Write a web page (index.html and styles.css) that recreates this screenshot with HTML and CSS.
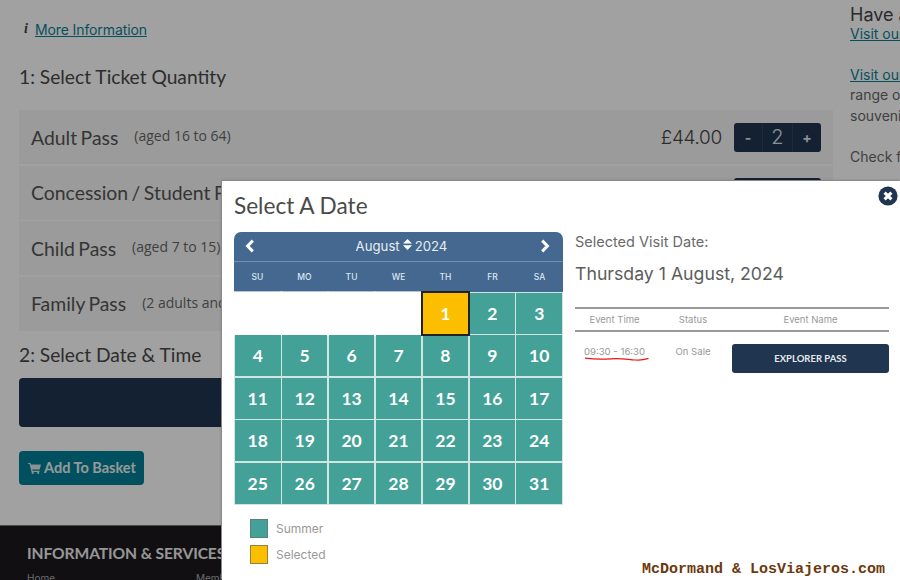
FILE: index.html
```html
<!DOCTYPE html>
<html lang="en">
<head>
<meta charset="utf-8">
<title>Select A Date</title>
<link rel="stylesheet" href="styles.css">
</head>
<body>
<div class="page">
  <div class="columns">
    <main class="main">
      <p class="info"><span class="info-i">i</span><a class="link" href="#">More Information</a></p>
      <h2 class="step step-one">1: Select Ticket Quantity</h2>
      <div class="tickets">
        <div class="ticket"><span class="t-name">Adult Pass</span><span class="t-note">(aged 16 to 64)</span><span class="t-price">£44.00</span>
          <div class="stepper"><span class="s-btn">-</span><span class="s-val">2</span><span class="s-btn">+</span></div></div>
        <div class="ticket"><span class="t-name">Concession / Student Pass</span>
          <div class="stepper stepper-end"></div></div>
        <div class="ticket"><span class="t-name">Child Pass</span><span class="t-note">(aged 7 to 15)</span></div>
        <div class="ticket"><span class="t-name">Family Pass</span><span class="t-note">(2 adults and 2 children)</span></div>
      </div>
      <h2 class="step step-two">2: Select Date &amp; Time</h2>
      <div class="date-bar"></div>
      <button class="basket" type="button">
        <svg class="cart" viewBox="0 0 14 13" width="13" height="12"><path d="M0 1h2.6l.5 1.6H14l-1.4 5.6H4.6l.3 1.3h7.6v1.2H3.8L1.7 2.2H0z" fill="#dfe6e8"/><circle cx="5" cy="11.8" r="1.2" fill="#dfe6e8"/><circle cx="11" cy="11.8" r="1.2" fill="#dfe6e8"/></svg>
        Add To Basket</button>
    </main>
    <aside class="side">
      <h3 class="side-title">Have a question?</h3>
      <a class="side-link" href="#">Visit our help centre</a>
      <a class="side-link side-gap" href="#">Visit our shop</a>
      <p class="side-text">range of gifts and</p>
      <p class="side-text">souvenirs to buy</p>
      <p class="side-text side-check">Check for offers</p>
    </aside>
  </div>
  <footer class="footer">
    <h4 class="foot-title">INFORMATION &amp; SERVICES</h4>
    <div class="foot-links"><span class="foot-a">Home</span><span>Membership</span></div>
  </footer>
</div>

<div class="overlay"></div>

<section class="modal">
  <h2 class="modal-title">Select A Date</h2>
  <button class="close" type="button" aria-label="Close">
    <svg viewBox="0 0 20 20" width="20" height="20"><circle cx="10" cy="10" r="9.6" fill="#1f3550"/><path d="M6.6 6.6l6.8 6.8M13.4 6.6l-6.8 6.8" stroke="#fff" stroke-width="3.2" stroke-linecap="butt"/></svg>
  </button>
  <div class="modal-body">
    <div class="calendar">
      <div class="cal-head">
        <div class="cal-nav">
          <svg class="chev" viewBox="0 0 10 14" width="10" height="14"><path d="M7.8 1.6L2.6 7l5.2 5.4" fill="none" stroke="#fff" stroke-width="3"/></svg>
          <div class="cal-month">August
            <svg class="sort" viewBox="0 0 9 11" width="9" height="11"><path d="M4.5 0L9 4.4H0zM4.5 11L0 6.2h9z" fill="#fff"/></svg>
            2024</div>
          <svg class="chev" viewBox="0 0 10 14" width="10" height="14"><path d="M2.2 1.6L7.4 7l-5.2 5.4" fill="none" stroke="#fff" stroke-width="3"/></svg>
        </div>
        <div class="cal-days"><span>SU</span><span>MO</span><span>TU</span><span>WE</span><span>TH</span><span>FR</span><span>SA</span></div>
      </div>
      <div class="cal-grid">
        <span class="blank"></span><span class="blank"></span><span class="blank"></span><span class="blank"></span>
        <span class="day sel">1</span><span class="day">2</span><span class="day">3</span>
        <span class="day">4</span><span class="day">5</span><span class="day">6</span><span class="day">7</span><span class="day">8</span><span class="day">9</span><span class="day">10</span>
        <span class="day">11</span><span class="day">12</span><span class="day">13</span><span class="day">14</span><span class="day">15</span><span class="day">16</span><span class="day">17</span>
        <span class="day">18</span><span class="day">19</span><span class="day">20</span><span class="day">21</span><span class="day">22</span><span class="day">23</span><span class="day">24</span>
        <span class="day">25</span><span class="day">26</span><span class="day">27</span><span class="day">28</span><span class="day">29</span><span class="day">30</span><span class="day">31</span>
      </div>
      <div class="legend">
        <div class="legend-row"><span class="swatch swatch-summer"></span>Summer</div>
        <div class="legend-row"><span class="swatch swatch-selected"></span>Selected</div>
      </div>
    </div>
    <div class="details">
      <div class="visit-label">Selected Visit Date:</div>
      <div class="visit-date">Thursday 1 August, 2024</div>
      <div class="ev-head"><span class="col-time">Event Time</span><span class="col-status">Status</span><span class="col-name">Event Name</span></div>
      <div class="ev-row">
        <span class="col-time ev-time">09:30 - 16:30
          <svg class="scribble" viewBox="0 0 64 4" width="64" height="4"><path d="M0 1.2C10 2.4 16 2.6 26 1.8S42 2.4 50 3 60 2.6 63.5 1.4" fill="none" stroke="#f01414" stroke-width="1.2"/></svg>
        </span>
        <span class="col-status ev-status">On Sale</span>
        <button class="ev-btn" type="button">EXPLORER PASS</button>
      </div>
    </div>
  </div>
</section>

<div class="watermark">McDormand &amp; LosViajeros.com</div>
</body>
</html>
```
FILE: styles.css
```css
* { box-sizing: border-box; }
html, body { margin: 0; height: 580px; overflow: hidden; background: #fff; }
body { position: relative; width: 900px; font-family: "Inter", "Open Sans", sans-serif; color: #555; }
h2, h3, h4, p { margin: 0; font-weight: 400; }

.page { height: 580px; display: flex; flex-direction: column; overflow: hidden; }
.columns { display: flex; flex: none; height: 525px; padding-left: 19px; }
.main { width: 814px; flex: none; }
.info { display: flex; align-items: center; gap: 7px; padding: 20px 0 0 5px; height: 38px; font-size: 14px; }
.info-i { font: italic 700 14px "Liberation Serif", serif; color: #444; }
.link { color: #0b7f96; letter-spacing: -.1px; }

.step { font-family: "Lato", sans-serif; font-size: 19.2px; line-height: 24px; color: #484848; }
.step-one { margin-top: 27px; }
.tickets { display: flex; flex-direction: column; gap: 1.5px; margin-top: 21px; }
.ticket { height: 54px; background: #f6f6f6; display: flex; align-items: center; padding: 0 12px; }
.t-name { font-family: "Lato", sans-serif; font-size: 19.4px; word-spacing: -1.5px; color: #555; white-space: nowrap; }
.t-note { font-family: "Open Sans", sans-serif; font-size: 14px; margin: -3px 0 0 16px; color: #666; white-space: nowrap; }
.t-price { margin-left: auto; font-size: 19px; font-weight: 300; color: #444; letter-spacing: -.3px; }
.stepper { display: flex; width: 87px; height: 29px; margin-left: 12px; background: #1f3550; border-radius: 3px; color: #dfe4e9; }
.stepper-end { margin-left: auto; }
.s-btn, .s-val { display: flex; align-items: center; justify-content: center; }
.s-btn { width: 28px; font-weight: 700; font-size: 14px; }
.s-val { width: 31px; font-size: 20px; font-weight: 300; border-left: 1px solid #2d4660; border-right: 1px solid #2d4660; }

.step-two { margin-top: 12px; }
.date-bar { height: 49px; margin-top: 11px; background: #1f3550; border-radius: 4px; }
.basket { display: flex; align-items: center; gap: 3px; width: 125px; height: 34px; margin-top: 24px; padding: 0 0 0 9px; border: 0; border-radius: 4px; background: #007f97; color: #eef2f3; font: 700 14.5px "Lato", sans-serif; white-space: nowrap; }

.side { flex: none; width: 300px; margin-left: 17px; padding-top: 4px; font-size: 14px; white-space: nowrap; }
.side-title { font-size: 18px; line-height: 21px; color: #444; }
.side-link { display: block; color: #0b7f96; line-height: 18px; }
.side-gap { margin-top: 23px; }
.side-text { line-height: 21px; color: #666; }
.side-check { margin-top: 20px; }

.footer { flex: 1; min-height: 0; overflow: hidden; background: #1b181e; border-top: 1px solid #777; padding: 17px 27px 0; }
.foot-title { font: 700 15.6px/20px "Lato", sans-serif; color: #eee; letter-spacing: -.1px; }
.foot-links { display: flex; margin-top: 9px; font-size: 10px; color: #aaa; }
.foot-a { width: 169px; }

.overlay { position: absolute; inset: 0; background: rgba(0, 0, 0, .37); }

.modal { position: absolute; left: 222px; top: 181px; width: 678px; height: 399px; padding: 11px 12px 0; background: #fff; box-shadow: -1px -1px 0 #8a8a8a, 0 0 3px rgba(0,0,0,.3); }
.modal-title { font-family: "Lato", sans-serif; font-size: 22.6px; line-height: 27px; color: #4a4a4a; }
.close { position: absolute; top: 5px; right: 2px; width: 20px; height: 20px; padding: 0; border: 0; background: none; display: flex; }
.modal-body { display: flex; gap: 12px; margin-top: 13px; }

.calendar { width: 329px; flex: none; }
.cal-head { background: #44688f; border-radius: 7px 7px 0 0; color: #fff; height: 60px; }
.cal-nav { display: flex; align-items: center; justify-content: space-between; height: 30px; padding: 0 13px 2px 11px; border-bottom: 1px solid #7390ad; }
.cal-month { display: flex; align-items: center; gap: 3px; margin-left: 8px; font-size: 13.2px; color: #e8edf2; }
.sort { margin-top: -2px; }
.cal-days { display: grid; grid-template-columns: repeat(7, 1fr); height: 30px; align-items: center; text-align: center; font-size: 8.5px; font-weight: 500; color: #dde6ee; }
.cal-grid { display: grid; grid-template-columns: repeat(7, 1fr); grid-auto-rows: 41px; background: #cfe6e3; padding: 1px; gap: 1.4px; }
.blank { background: #fff; box-shadow: 0 0 0 1.6px #fff; }
.day { display: flex; align-items: center; justify-content: center; background: #43a197; color: #fff; font: 700 17.5px "Lato", sans-serif; position: relative; }
.sel { background: #fcbf00; border: 2px solid #222; margin: -2px; font-size: 17px; z-index: 1; }
.legend { padding: 11px 0 0 16px; font-size: 12px; color: #999; }
.legend-row { display: flex; align-items: center; gap: 8px; height: 26px; }
.swatch { width: 18px; height: 19px; border: 1px solid; }
.swatch-summer { background: #43a197; border-color: #5d7f7c; }
.swatch-selected { background: #fcbf00; border-color: #92803d; }

.details { width: 314px; flex: none; color: #777; }
.visit-label { font-size: 14.5px; line-height: 20px; color: #6a6a6a; }
.visit-date { font-size: 17.7px; line-height: 24px; margin-top: 10px; color: #5c5c5c; }
.ev-head { display: flex; align-items: center; height: 25px; margin-top: 21px; border-top: 2px solid #999; border-bottom: 2px solid #999; font-size: 9.5px; color: #999; text-align: center; }
.col-time { width: 79px; flex: none; }
.col-status { width: 78px; flex: none; }
.col-name { flex: 1; }
.ev-row { display: flex; align-items: flex-start; padding-top: 12px; font-size: 9.6px; color: #999; text-align: center; }
.ev-status, .ev-time { padding-top: 1.5px; line-height: 12px; }
.ev-time { position: relative; }
.scribble { position: absolute; left: 10px; top: 13px; }
.ev-btn { flex: 1; height: 29px; border: 0; border-radius: 3px; background: #1f3550; color: #e5e9ed; font: 700 9.5px "Lato", sans-serif; }

.watermark { position: absolute; left: 642px; top: 561px; font: 700 15px/17px "Liberation Mono", monospace; color: #6b390c; white-space: nowrap; }
```
